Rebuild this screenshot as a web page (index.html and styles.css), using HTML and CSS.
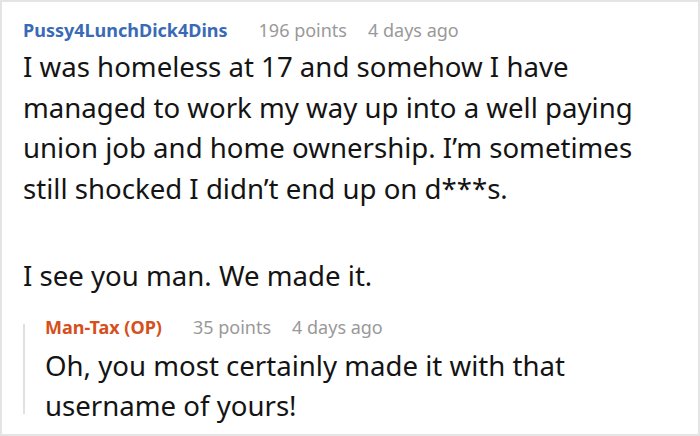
FILE: index.html
```html
<!DOCTYPE html>
<html>
<head>
<meta charset="utf-8">
<link rel="stylesheet" href="styles.css">
</head>
<body>
<div class="frame">
  <div class="comment">
    <div class="meta">
      <span class="user">Pussy4LunchDick4Dins</span>
      <span class="points">196 points</span>
      <span class="time">4 days ago</span>
    </div>
    <div class="text">
      <p>I was homeless at 17 and somehow I have managed to work my way up into a well paying union job and home ownership. I’m sometimes still shocked I didn’t end up on d***s.</p>
      <p>I see you man. We made it.</p>
    </div>
    <div class="reply">
      <div class="meta">
        <span class="user op">Man-Tax (OP)</span>
        <span class="points">35 points</span>
        <span class="time">4 days ago</span>
      </div>
      <div class="text">
        <p>Oh, you most certainly made it with that username of yours!</p>
      </div>
    </div>
  </div>
</div>
</body>
</html>
```
FILE: styles.css
```css
html, body {
  margin: 0;
  padding: 0;
  background: #fff;
}
body {
  font-family: "Noto Sans", "Open Sans", sans-serif;
  width: 700px;
  height: 436px;
  overflow: hidden;
}
.frame {
  box-sizing: border-box;
  width: 700px;
  height: 436px;
  border: 2px solid #e4e4e4;
  padding: 12px 44px 0 21px;
}
.meta {
  display: flex;
  align-items: baseline;
  font-size: 18px;
  line-height: 32px;
  color: #999;
}
.user {
  font-weight: 700;
  color: #3a6ab6;
  margin-right: 31px;
}
.user.op {
  color: #d5501c;
}
.points {
  margin-right: 21px;
}
.text {
  font-size: 27.6px;
  line-height: 40.5px;
  color: #141414;
}
.text p {
  margin: 0;
}
.text p + p {
  margin-top: 47px;
}
.reply {
  position: relative;
  padding-left: 22px;
  margin-top: 15px;
}
.reply .text {
  margin-top: 2px;
}
.reply::before {
  content: "";
  position: absolute;
  left: 0;
  top: 13px;
  bottom: 12px;
  width: 2px;
  background: #e0e0e0;
}
```
